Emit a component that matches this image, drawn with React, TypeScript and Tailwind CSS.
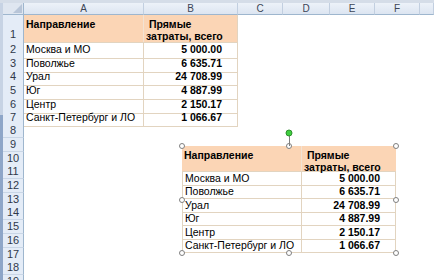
const COLS = ["A", "B", "C", "D", "E", "F", ""];

const DATA: [string, string][] = [
  ["Москва и МО", "5 000.00"],
  ["Поволжье", "6 635.71"],
  ["Урал", "24 708.99"],
  ["Юг", "4 887.99"],
  ["Центр", "2 150.17"],
  ["Санкт-Петербург и ЛО", "1 066.67"],
];

// row boundaries from 42px, 13.7px apart, rounded to whole pixels
const ROW_TOPS = [42, 56, 69, 83, 97, 110, 124, 138, 152, 165, 179, 193, 206, 220, 234, 248, 261, 275, 289];

const gridCols = "grid grid-cols-[21px_120px_94px_45px_47px_45px_45px_1fr]";

function RowHeader({ n, bottom }: { n: number; bottom?: boolean }) {
  return (
    <div
      className={
        "flex justify-center border-r border-b border-r-[#9eb6ce] border-b-[#c9d6e6] bg-[#e4ecf7] text-[11px] leading-[13px] text-[#30394a] " +
        (bottom ? "items-end pb-[1px]" : "items-center")
      }
    >
      {n}
    </div>
  );
}

function Handle({ className }: { className: string }) {
  return (
    <div
      className={
        "absolute h-[6px] w-[6px] -translate-x-1/2 -translate-y-1/2 rounded-full border border-[#808080] bg-white " + className
      }
    />
  );
}

function TablePicture() {
  return (
    <div className="absolute left-[182px] top-[146px] h-[107px] w-[214px] bg-white">
      <div className="flex h-[26px] border-b border-[#e2d4c0] bg-[#fbd5b5] font-bold">
        <div className="w-[120px] border-r border-[#f3e3d3] px-[2px] pt-[3px] leading-[12px]">Направление</div>
        <div className="flex-1 px-[2px] pt-[3px] leading-[12px]">
          &nbsp;Прямые
          <br />
          затраты, всего
        </div>
      </div>
      {DATA.map(([name, value], i) => (
        <div
          key={name}
          className={"flex border-b border-l border-[#e2d4c0] " + (i % 2 === 0 ? "h-[14px]" : "h-[13px]")}
        >
          <div className="flex w-[119px] items-center whitespace-nowrap border-r border-[#e2d4c0] px-[2px]">{name}</div>
          <div className="flex flex-1 items-center justify-end whitespace-nowrap border-r border-[#e2d4c0] pr-[15px] font-bold">
            {value}
          </div>
        </div>
      ))}
      <Handle className="left-0 top-0" />
      <Handle className="left-[107px] top-0" />
      <Handle className="left-[214px] top-0" />
      <Handle className="left-0 top-[54px]" />
      <Handle className="left-[214px] top-[54px]" />
      <Handle className="left-0 top-[107px]" />
      <Handle className="left-[107px] top-[107px]" />
      <Handle className="left-[214px] top-[107px]" />
      <div className="absolute left-[107px] top-[-11px] h-[11px] w-px bg-[#808080]" />
      <div className="absolute left-[107px] top-[-13px] h-[7px] w-[7px] -translate-x-1/2 -translate-y-1/2 rounded-full border border-[#2f8f2f] bg-[#3fcf3f]" />
    </div>
  );
}

export default function App() {
  return (
    <div className="relative h-[280px] w-[434px] overflow-hidden bg-white font-['Liberation_Sans',Arial,sans-serif] text-[10.5px] text-black">
      <div className="h-[3px] bg-[#d5dde8]" />
      <div className="flex">
        <div className="flex w-[3px] flex-col">
          <div className="h-[112px] bg-[#c7d3e4]" />
          <div className="flex-1 bg-[#8ea6c8]" />
        </div>
        <div className="flex-1">
          {/* column headers */}
          <div className={gridCols + " h-[12px]"}>
            <div className="relative border-r border-b border-[#9eb6ce] bg-[#dfe6f0]">
              <div className="absolute bottom-[1px] right-[1px] h-[9px] w-[9px] bg-[#b8c5d8] [clip-path:polygon(100%_0,100%_100%,0_100%)]" />
            </div>
            {COLS.map((c, i) => (
              <div
                key={i}
                className="flex items-center justify-center border-r border-b border-r-[#c2cfe0] border-b-[#9eb6ce] bg-gradient-to-b from-[#edf2f9] to-[#dce5f1] text-[10px] leading-[11px] text-[#3c4657]"
              >
                {c}
              </div>
            ))}
          </div>
          {/* row 1 */}
          <div className={gridCols + " h-[27px]"}>
            <RowHeader n={1} bottom />
            <div className="border-r border-b border-r-[#f3e3d3] border-b-[#e2d4c0] bg-[#fbd5b5] px-[2px] pt-[3px] font-bold leading-[12px]">
              Направление
            </div>
            <div className="border-r border-b border-[#e2d4c0] bg-[#fbd5b5] px-[2px] pt-[3px] font-bold leading-[12px]">
              &nbsp;Прямые
              <br />
              затраты, всего
            </div>
            <div className="col-span-5" />
          </div>
          {/* rows 2..19 */}
          {ROW_TOPS.slice(0, -1).map((top, i) => {
            const n = i + 2;
            const h = ROW_TOPS[i + 1] - top;
            const row = DATA[i];
            return (
              <div key={n} className={gridCols + (h === 14 ? " h-[14px]" : " h-[13px]")}>
                <RowHeader n={n} />
                {row ? (
                  <>
                    <div className="flex items-center whitespace-nowrap border-r border-b border-[#e2d4c0] px-[2px]">{row[0]}</div>
                    <div className="flex items-center justify-end whitespace-nowrap border-r border-b border-[#e2d4c0] pr-[15px] font-bold">
                      {row[1]}
                    </div>
                    <div className="col-span-5" />
                  </>
                ) : (
                  <div className="col-span-7" />
                )}
              </div>
            );
          })}
        </div>
      </div>
      <TablePicture />
    </div>
  );
}
